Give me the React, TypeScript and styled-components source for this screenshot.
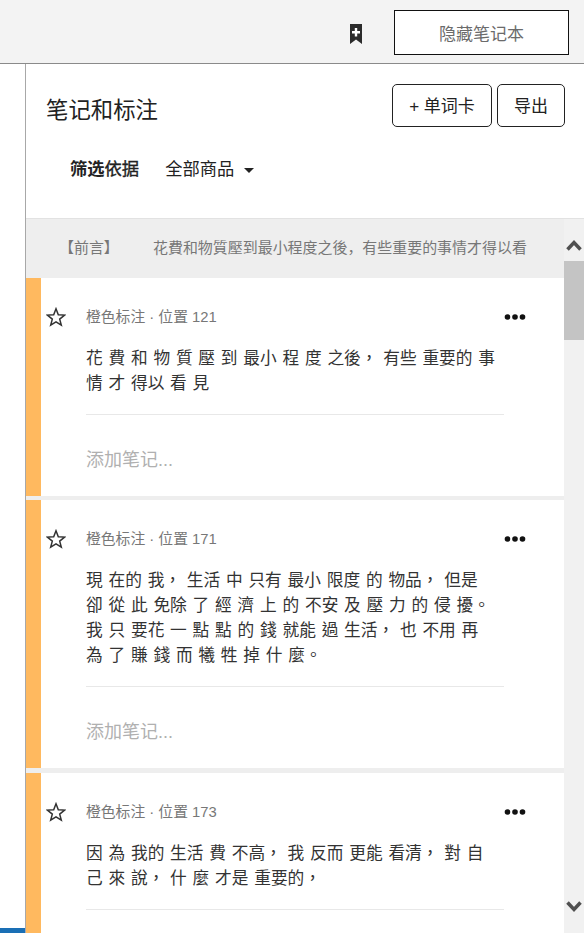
import React from "react";
import styled, { createGlobalStyle } from "styled-components";

const GlobalStyle = createGlobalStyle`
  html, body {
    margin: 0;
    padding: 0;
    height: 100%;
    overflow: hidden;
    background: #fff;
  }
  * { box-sizing: border-box; }
  body {
    font-family: "Liberation Sans", "Noto Sans CJK SC", sans-serif;
  }
`;

const Page = styled.div`
  width: 584px;
  height: 933px;
  display: flex;
  flex-direction: column;
  overflow: hidden;
`;

const TopBar = styled.div`
  height: 64px;
  flex: none;
  display: flex;
  align-items: flex-start;
  justify-content: flex-end;
  padding: 10px 15px 0 0;
  gap: 32px;
  background: #f3f3f3;
  border-bottom: 1px solid #8a8a8a;
`;

const BookmarkIcon = styled.svg`
  width: 12px;
  height: 20px;
  margin-top: 14px;
`;

const HideButton = styled.div`
  width: 175px;
  height: 45px;
  display: flex;
  align-items: center;
  justify-content: center;
  background: #fff;
  border: 1px solid #111;
  color: #6b6b6b;
  font-size: 17px;
`;

const Body = styled.div`
  flex: 1;
  display: flex;
  min-height: 0;
`;

const LeftRail = styled.div`
  width: 26px;
  flex: none;
  display: flex;
  flex-direction: column;
  justify-content: flex-end;
  border-right: 1px solid #a8a8a8;
`;

const RailBlue = styled.div`
  height: 5px;
  background: #1a6fb5;
`;

const Panel = styled.div`
  flex: 1;
  min-width: 0;
  display: flex;
  flex-direction: column;
`;

const Header = styled.div`
  height: 155px;
  flex: none;
  padding: 20px 19px 0 20px;
  border-bottom: 1px solid #e2e2e2;
`;

const TitleRow = styled.div`
  display: flex;
  align-items: flex-start;
  justify-content: space-between;
`;

const Title = styled.div`
  font-size: 22.4px;
  color: #222;
  line-height: 43px;
  padding-top: 5px;
`;

const HeaderActions = styled.div`
  display: flex;
  gap: 5px;
`;

const OutlineButton = styled.div<{ $w: number }>`
  width: ${(p) => p.$w}px;
  height: 43px;
  display: flex;
  align-items: center;
  justify-content: center;
  padding-bottom: 3px;
  border: 1px solid #222;
  border-radius: 5px;
  color: #222;
  font-size: 17px;
`;

const FilterRow = styled.div`
  display: flex;
  align-items: center;
  margin-top: 24px;
  padding-left: 24px;
  line-height: 26px;
  font-size: 17.3px;
  color: #222;
`;

const FilterLabel = styled.span`
  margin-right: 26px;
  font-weight: 700;
`;

const FilterLabelSoft = styled.span`
  font-weight: 400;
  -webkit-text-stroke: 0.35px #222;
`;

const Caret = styled.span`
  width: 0;
  height: 0;
  margin: 3px 0 0 10px;
  border-left: 5px solid transparent;
  border-right: 5px solid transparent;
  border-top: 5px solid #222;
`;

const Content = styled.div`
  flex: 1;
  min-height: 0;
  display: flex;
`;

const List = styled.div`
  width: 538px;
  flex: none;
  display: flex;
  flex-direction: column;
  gap: 4.4px;
  background: #eee;
  overflow: hidden;
`;

const ChapterBar = styled.div`
  height: 59px;
  flex: none;
  margin-bottom: -4.4px;
  display: flex;
  align-items: center;
  padding: 0 0 4px 33px;
  font-size: 14.96px;
  color: #777;
  white-space: nowrap;
  overflow: hidden;
`;

const ChapterTag = styled.span`
  width: 94px;
  flex: none;
`;

const Card = styled.div`
  flex: none;
  display: flex;
  background: #fff;
`;

const Stripe = styled.div`
  width: 15px;
  flex: none;
  background: #ffb95f;
`;

const StarCol = styled.div`
  width: 45px;
  flex: none;
  padding: 29px 0 0 5px;
`;

const StarIcon = styled.svg`
  display: block;
  width: 20px;
  height: 20px;
`;

const CardMain = styled.div`
  width: 418px;
  flex: none;
  padding-top: 28px;
`;

const MetaRow = styled.div`
  height: 22px;
  display: flex;
  align-items: center;
  justify-content: space-between;
  font-size: 14.8px;
  color: #777;
`;

const MetaText = styled.span`
  padding-bottom: 3px;
`;

const DotsIcon = styled.svg`
  width: 22px;
  height: 6px;
  margin-right: -22px;
`;

const Quote = styled.div`
  margin-top: 18px;
  font-family: "Liberation Sans", "Noto Sans CJK TC", sans-serif;
  font-size: 16.7px;
  line-height: 25px;
  color: #333;
  word-spacing: 1.15px;
`;

const QuoteLine = styled.div`
  white-space: nowrap;
`;

const Divider = styled.div`
  margin-top: 18px;
  border-top: 1px solid #e8e8e8;
`;

const NotePlaceholder = styled.div`
  height: 81px;
  padding-top: 32px;
  font-size: 18px;
  line-height: 26px;
  color: #b0b0b0;
`;

const ScrollBar = styled.div`
  flex: 1;
  display: flex;
  flex-direction: column;
  align-items: center;
  background: #f1f1f1;
`;

const ArrowIcon = styled.svg`
  flex: none;
  width: 16px;
  height: 13px;
`;

const UpArrow = styled(ArrowIcon)`
  margin-top: 20px;
`;

const Thumb = styled.div`
  width: 100%;
  height: 79px;
  margin-top: 9px;
  background: #c4c4c4;
`;

const DownArrow = styled(ArrowIcon)`
  margin-top: auto;
  margin-bottom: 20px;
`;

const notes = [
  {
    pos: 121,
    lines: ["花 費 和 物 質 壓 到 最小 程 度 之後， 有些 重要的 事", "情 才 得以 看 見"],
    hasNote: true,
  },
  {
    pos: 171,
    lines: [
      "現 在的 我， 生活 中 只有 最小 限度 的 物品， 但是",
      "卻 從 此 免除 了 經 濟 上 的 不安 及 壓 力 的 侵 擾。",
      "我 只 要花 一 點 點 的 錢 就能 過 生活， 也 不用 再",
      "為 了 賺 錢 而 犧 牲 掉 什 麼。",
    ],
    hasNote: true,
  },
  {
    pos: 173,
    lines: ["因 為 我的 生活 費 不高， 我 反而 更能 看清， 對 自", "己 來 說， 什 麼 才是 重要的，"],
    hasNote: false, // below the fold
  },
];

export default function App(): React.ReactElement {
  return (
    <Page>
      <GlobalStyle />
      <TopBar>
        <BookmarkIcon viewBox="0 0 12 20">
          <path d="M0 0h12v20l-6-4.500L0 20z" fill="#2b2b2b" />
          <path d="M4.800 4h2.400v3H10v2.400H7.200v3H4.800v-3H2V7h2.800z" fill="#fff" />
        </BookmarkIcon>
        <HideButton>隐藏笔记本</HideButton>
      </TopBar>
      <Body>
        <LeftRail>
          <RailBlue />
        </LeftRail>
        <Panel>
          <Header>
            <TitleRow>
              <Title>笔记和标注</Title>
              <HeaderActions>
                <OutlineButton $w={100}>+ 单词卡</OutlineButton>
                <OutlineButton $w={68}>导出</OutlineButton>
              </HeaderActions>
            </TitleRow>
            <FilterRow>
              <FilterLabel>
                筛选<FilterLabelSoft>依据</FilterLabelSoft>
              </FilterLabel>
              全部商品
              <Caret />
            </FilterRow>
          </Header>
          <Content>
            <List>
              <ChapterBar>
                <ChapterTag>【前言】</ChapterTag>
                花費和物質壓到最小程度之後，有些重要的事情才得以看
              </ChapterBar>
              {notes.map((n) => (
                <Card key={n.pos}>
                  <Stripe />
                  <StarCol>
                    <StarIcon viewBox="0 0 20 20">
                      <path
                        d="M10 1.800l2.300 5.900 6.300.4-4.900 4 1.600 6.100L10 14.800l-5.300 3.400 1.600-6.100-4.900-4 6.300-.4z"
                        fill="none"
                        stroke="#333"
                        strokeWidth="1.500"
                      />
                    </StarIcon>
                  </StarCol>
                  <CardMain>
                    <MetaRow>
                      <MetaText>橙色标注 · 位置 {n.pos}</MetaText>
                      <DotsIcon viewBox="0 0 22 6">
                        <circle cx="3.500" cy="3" r="2.800" fill="#111" />
                        <circle cx="11" cy="3" r="2.800" fill="#111" />
                        <circle cx="18.500" cy="3" r="2.800" fill="#111" />
                      </DotsIcon>
                    </MetaRow>
                    <Quote>
                      {n.lines.map((line) => (
                        <QuoteLine key={line}>{line}</QuoteLine>
                      ))}
                    </Quote>
                    <Divider />
                    <NotePlaceholder>{n.hasNote && "添加笔记..."}</NotePlaceholder>
                  </CardMain>
                </Card>
              ))}
            </List>
            <ScrollBar>
              <UpArrow viewBox="0 0 16 13">
                <path d="M1.500 10.500L8 3.500l6.500 7" fill="none" stroke="#505050" strokeWidth="3.500" />
              </UpArrow>
              <Thumb />
              <DownArrow viewBox="0 0 16 13">
                <path d="M1.500 2.500L8 9.500l6.500-7" fill="none" stroke="#505050" strokeWidth="3.500" />
              </DownArrow>
            </ScrollBar>
          </Content>
        </Panel>
      </Body>
    </Page>
  );
}
